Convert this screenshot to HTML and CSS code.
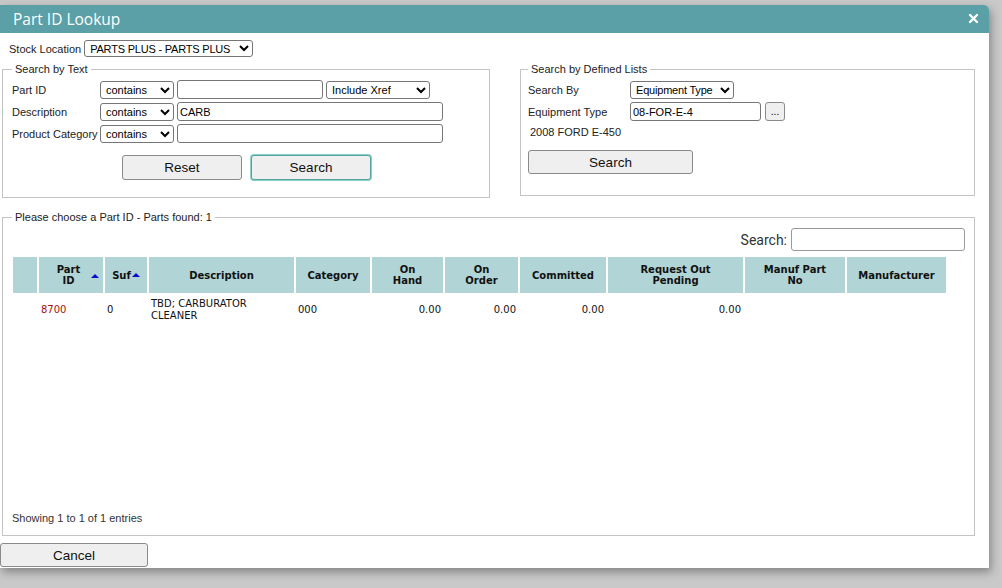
FILE: index.html
```html
<!DOCTYPE html>
<html lang="en">
<head>
  <meta charset="UTF-8">
  <title>Part ID Lookup</title>
  <link rel="stylesheet" href="styles.css">
</head>
<body>

  <div class="dialog">
    <div class="titlebar">
      <span class="title">Part ID Lookup</span>
      <span class="close">
        <svg width="11" height="11" viewBox="0 0 11 11"><path d="M2 2 L9 9 M9 2 L2 9" stroke="#fff" stroke-width="2.3" stroke-linecap="round"/></svg>
      </span>
    </div>

    <div class="body">
      <div class="stock-row">
        <label>Stock Location</label>
        <select class="sel-stock"><option>PARTS PLUS - PARTS PLUS</option></select>
      </div>

      <div class="search-boxes">
        <fieldset class="box box-text">
          <legend>Search by Text</legend>
          <div class="row">
            <label>Part ID</label>
            <select class="sel-op"><option>contains</option></select>
            <input type="text" class="inp-short">
            <select class="sel-xref"><option>Include Xref</option></select>
          </div>
          <div class="row">
            <label>Description</label>
            <select class="sel-op"><option>contains</option></select>
            <input type="text" class="inp-long" value="CARB">
          </div>
          <div class="row">
            <label>Product Category</label>
            <select class="sel-op"><option>contains</option></select>
            <input type="text" class="inp-long">
          </div>
          <div class="btn-row">
            <button class="btn">Reset</button>
            <button class="btn btn-focus">Search</button>
          </div>
        </fieldset>

        <fieldset class="box box-lists">
          <legend>Search by Defined Lists</legend>
          <div class="row">
            <label>Search By</label>
            <select class="sel-by"><option>Equipment Type</option></select>
          </div>
          <div class="row">
            <label>Equipment Type</label>
            <input type="text" class="inp-equip" value="08-FOR-E-4">
            <button class="btn-dots">...</button>
          </div>
          <div class="equip-desc">2008 FORD E-450</div>
          <button class="btn btn-wide">Search</button>
        </fieldset>
      </div>

      <fieldset class="results">
        <legend>Please choose a Part ID - Parts found: 1</legend>
        <div class="filter">
          <label>Search:</label>
          <input type="text" class="inp-filter">
        </div>
        <table class="grid">
          <colgroup>
            <col class="c0"><col class="c1"><col class="c2"><col class="c3">
            <col class="c4"><col class="c5"><col class="c6"><col class="c7">
            <col class="c8"><col class="c9"><col class="c10">
          </colgroup>
          <thead>
            <tr>
              <th></th>
              <th class="sorted-id">Part<br>ID<span class="arrow"></span></th>
              <th>Suf<span class="arrow inline"></span></th>
              <th>Description</th>
              <th>Category</th>
              <th>On<br>Hand</th>
              <th>On<br>Order</th>
              <th>Committed</th>
              <th>Request Out<br>Pending</th>
              <th>Manuf Part<br>No</th>
              <th>Manufacturer</th>
            </tr>
          </thead>
          <tbody>
            <tr>
              <td></td>
              <td class="part">8700</td>
              <td>0</td>
              <td>TBD; CARBURATOR<br>CLEANER</td>
              <td>000</td>
              <td class="num">0.00</td>
              <td class="num">0.00</td>
              <td class="num">0.00</td>
              <td class="num">0.00</td>
              <td></td>
              <td></td>
            </tr>
          </tbody>
        </table>
        <div class="info">Showing 1 to 1 of 1 entries</div>
      </fieldset>

      <button class="btn btn-cancel">Cancel</button>
    </div>
  </div>

</body>
</html>
```

FILE: styles.css
```css
body {
  margin: 0;
  background: #c9c9c9;
  font-family: "Liberation Sans", Arial, sans-serif;
  width: 1002px;
  height: 588px;
  overflow: hidden;
}

.dialog {
  position: absolute;
  top: 5px;
  left: 0;
  width: 989px;
  height: 563px;
  background: #fff;
  border-top-right-radius: 5px;
  box-shadow: 2px 4px 10px rgba(0,0,0,0.35);
}

.titlebar {
  height: 28px;
  background: #5ba0a7;
  border-top-right-radius: 5px;
  display: flex;
  align-items: center;
  justify-content: space-between;
  padding: 0 10px 0 13px;
}

.title {
  color: #fff;
  font-family: "Open Sans", sans-serif;
  font-size: 15.5px;
}

.close {
  display: flex;
  margin-top: -1px;
}

.body {
  padding: 0 14px 0 2px;
}

label {
  font-size: 11px;
  color: #222;
}

select,
input {
  font-family: "Liberation Sans", Arial, sans-serif;
  font-size: 11px;
  color: #000;
  box-sizing: border-box;
  border: 1px solid #767676;
  border-radius: 3px;
  background: #fff;
  margin: 0;
  padding: 0 0 0 2px;
}

select {
  height: 18px;
  padding-left: 1px;
}

input {
  height: 19px;
}

.stock-row {
  display: flex;
  align-items: center;
  gap: 3px;
  margin-top: 7px;
  padding-left: 7px;
}

.sel-stock {
  width: 169px;
  height: 17px;
  letter-spacing: -0.2px;
}

.search-boxes {
  display: flex;
  gap: 30px;
  margin-top: 6px;
}

fieldset {
  margin: 0;
  border: 1px solid #c4c4c4;
  min-width: 0;
}

legend {
  font-size: 11px;
  color: #222;
  padding: 0 3px;
  line-height: 13px;
}

.box {
  box-sizing: border-box;
  height: 135px;
  padding: 4px 0 0 9px;
}

.box-text {
  width: 488px;
}

.box-lists {
  width: 455px;
  height: 133px;
  padding-left: 7px;
}

.row {
  display: flex;
  align-items: center;
  height: 19px;
  margin-bottom: 3px;
}

.box-text .row label {
  width: 88px;
}

.sel-op {
  width: 74px;
}

.inp-short {
  width: 146px;
  margin-left: 3px;
}

.sel-xref {
  width: 104px;
  margin-left: 3px;
}

.inp-long {
  width: 266px;
  margin-left: 3px;
}

.btn {
  font-family: "Liberation Sans", Arial, sans-serif;
  font-size: 13.5px;
  color: #111;
  background: #efefef;
  border: 1px solid #8a8a8a;
  border-radius: 3px;
  height: 25px;
  padding: 0;
}

.btn-row {
  display: flex;
  gap: 9px;
  margin-top: 12px;
  padding-left: 110px;
}

.btn-row .btn {
  width: 120px;
}

.btn-focus {
  width: 121px;
  border: 1px solid #4fa7a0;
  box-shadow: 0 0 0 1px #8ccfc7;
}

.box-lists .row label {
  width: 102px;
}

.sel-by {
  width: 104px;
  letter-spacing: -0.2px;
}

.inp-equip {
  width: 131px;
}

.btn-dots {
  width: 20px;
  height: 19px;
  margin-left: 4px;
  padding: 0;
  font-size: 10px;
  background: #efefef;
  border: 1px solid #8a8a8a;
  border-radius: 3px;
}

.equip-desc {
  font-size: 11px;
  color: #222;
  margin: 5px 0 0 2px;
}

.btn-wide {
  width: 165px;
  height: 24px;
  margin-top: 12px;
}

.results {
  box-sizing: border-box;
  width: 973px;
  height: 325px;
  margin-top: 13px;
  padding: 4px 9px 11px 8px;
  display: flex;
  flex-direction: column;
}

.results legend {
  margin-left: 1px;
}

.filter {
  display: flex;
  justify-content: flex-end;
  align-items: center;
  gap: 4px;
}

.filter label {
  font-family: Roboto, sans-serif;
  font-size: 14px;
  color: #333;
}

.inp-filter {
  width: 174px;
  height: 23px;
  border: 1px solid #999;
  border-radius: 3px;
}

.grid {
  table-layout: fixed;
  width: 937px;
  border-collapse: separate;
  border-spacing: 2px 0;
  margin-top: 6px;
  font-family: "DejaVu Sans", Verdana, sans-serif;
  font-size: 10px;
  color: #111;
}

.c0 { width: 24px; }
.c1 { width: 64px; }
.c2 { width: 42px; }
.c3 { width: 145px; }
.c4 { width: 74px; }
.c5 { width: 71px; }
.c6 { width: 73px; }
.c7 { width: 86px; }
.c8 { width: 135px; }
.c9 { width: 100px; }
.c10 { width: 99px; }

.grid th {
  background: #b1d4d6;
  height: 36px;
  padding: 0;
  font-weight: bold;
  line-height: 11px;
  text-align: center;
  position: relative;
  white-space: nowrap;
}

.grid th.sorted-id {
  padding-right: 5px;
}

.arrow {
  position: absolute;
  right: 4px;
  top: 17px;
  width: 0;
  height: 0;
  border-left: 4px solid transparent;
  border-right: 4px solid transparent;
  border-bottom: 4px solid #0a0ad0;
}

.arrow.inline {
  position: static;
  display: inline-block;
  margin-left: 1px;
  vertical-align: 2px;
}

.grid td {
  padding: 3px 2px 0 2px;
  height: 27px;
  line-height: 12px;
  vertical-align: middle;
  overflow: hidden;
  white-space: nowrap;
}

.grid td.part {
  color: #a50f0f;
}

.grid td.num {
  text-align: right;
}

.info {
  margin-top: auto;
  font-family: "Liberation Sans Narrow", "Liberation Sans", sans-serif;
  font-size: 11px;
  color: #333;
  padding-left: 1px;
}

.btn-cancel {
  width: 148px;
  height: 24px;
  margin: 7px 0 0 -2px;
}
```
